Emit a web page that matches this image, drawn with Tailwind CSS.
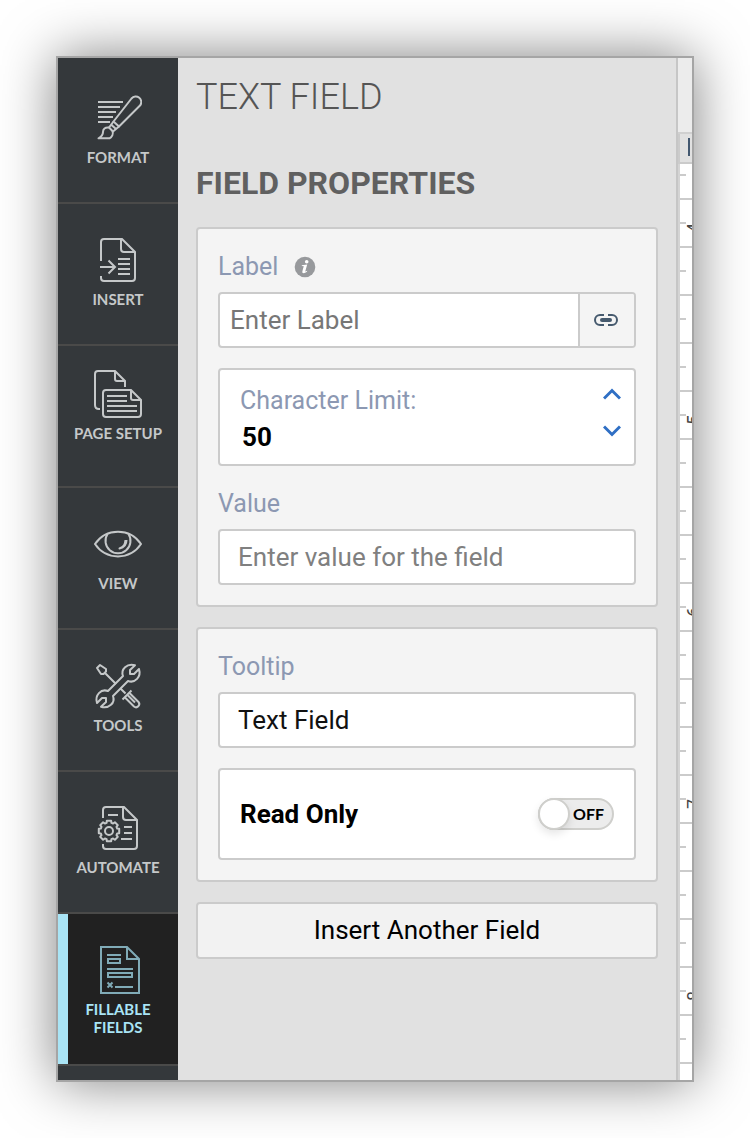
<!DOCTYPE html>
<html lang="en">
<head>
<meta charset="utf-8">
<meta name="viewport" content="width=device-width, initial-scale=1">
<title>Text Field</title>
<script src="https://cdn.jsdelivr.net/npm/@tailwindcss/browser@4"></script>
</head>
<body class="bg-white">
<div class="flex min-h-screen p-14">
  <div class="flex flex-1 overflow-hidden border-2 border-[#a5a5a5] bg-[#e1e1e1] shadow-[0_0_52px_rgba(0,0,0,0.5)]">

    <nav class="w-30 shrink-0 bg-[#34383b] font-['Lato',sans-serif] text-[15px] leading-[18px] font-bold text-[#c5c8c9]" aria-label="Editor sections">
      <button type="button" class="flex w-full flex-col items-center gap-[6px] border-b-2 border-[#4a4a49] pt-9 pb-9">
        <svg class="size-12" viewBox="0 0 48 48" fill="none" stroke="currentColor" stroke-width="2" stroke-linejoin="round" aria-hidden="true">
          <path d="M4 8H29M4 13H26M4 18H22M4 23H19M4 28H16"/>
          <path d="M37.500 4.500 19.500 27.500 25 32.500 46 11.500A5.300 5.300 0 0 0 37.500 4.500Z"/>
          <path d="M19.500 27.500 15 33.500 19 37.500 25 32.500M17 30.500 22 35"/>
          <path d="M15 33.500C11 33 9 35 9 38 9 41 8 42.500 4.500 44.300H15.500C18 43 19.500 40 18.500 37"/>
        </svg>
        <span>FORMAT</span>
      </button>
      <button type="button" class="flex w-full flex-col items-center gap-[6px] border-b-2 border-[#4a4a49] pt-8 pb-9">
        <svg class="size-12" viewBox="0 0 48 48" fill="none" stroke="currentColor" stroke-width="2" aria-hidden="true">
          <path d="M7 25V6Q7 3 10 3H28L41 16V42Q41 45 38 45H10Q7 45 7 42V40"/>
          <path d="M27 3V13Q27 16 30 16H41"/>
          <path d="M6 31H21M14.500 24.500 21 31 14.500 37.500M24 23H36M24 28H36M24 33H36M24 38H36"/>
        </svg>
        <span>INSERT</span>
      </button>
      <button type="button" class="flex w-full flex-col items-center gap-[6px] border-b-2 border-[#4a4a49] pt-6 pb-11">
        <svg class="size-12" viewBox="0 0 48 48" fill="none" stroke="currentColor" stroke-width="2" aria-hidden="true">
          <path d="M6 39H5Q1 39 1 35V4Q1 1 4 1H21L31 11V17"/>
          <path d="M21 1V9Q21 11 23 11H31"/>
          <path d="M12 20H37L47 30V44Q47 47 44 47H12Q9 47 9 44V23Q9 20 12 20Z"/>
          <path d="M37 20V28Q37 30 39 30H47M13 26H33M13 31H33M13 36H43M13 41H43"/>
        </svg>
        <span>PAGE SETUP</span>
      </button>
      <button type="button" class="flex w-full flex-col items-center gap-[6px] border-b-2 border-[#4a4a49] pt-8 pb-9">
        <svg class="size-12" viewBox="0 0 48 48" fill="none" stroke="currentColor" stroke-width="2" stroke-linejoin="round" aria-hidden="true">
          <path d="M1 24C12 7.500 36 7.500 47 24 36 40.500 12 40.500 1 24Z"/>
          <path d="M13.500 14A12.500 12.500 0 1 0 34.500 14"/>
          <path d="M32.500 20C32.500 24.500 30 27.500 25.500 28.500 30 26.500 31 24.500 31.500 20"/>
        </svg>
        <span>VIEW</span>
      </button>
      <button type="button" class="flex w-full flex-col items-center gap-[6px] border-b-2 border-[#4a4a49] pt-8 pb-9">
        <svg class="size-12" viewBox="0 0 48 48" fill="none" stroke="currentColor" stroke-width="2" stroke-linejoin="round" aria-hidden="true">
          <path d="M6 3 3 6 7 12 9.500 12 12 9.500V7ZM10.500 10.500 22 22M26.500 26.500 31.500 31.500"/>
          <path d="M29 14C26.500 7 33 1 41 3.200L36 8V12H40L45 7C47.500 15 41 21.500 34 19L19 34C21.500 41 15 47 7 44.800L12 40V36H8L3 41C.5 33 7 26.500 14 29Z"/>
          <path d="M28.500 37.500 37.500 28.500M35.500 31 44.500 40A3.200 3.200 0 0 1 40 44.500L31 35.500M34 33.500 41 40.500"/>
        </svg>
        <span>TOOLS</span>
      </button>
      <button type="button" class="flex w-full flex-col items-center gap-[6px] border-b-2 border-[#4a4a49] pt-8 pb-9">
        <svg class="size-12" viewBox="0 0 48 48" fill="none" stroke="currentColor" stroke-width="2" aria-hidden="true">
          <path d="M9 14V6Q9 3 12 3H30L43 16V42Q43 45 40 45H12Q9 45 9 42V40"/>
          <path d="M29 3V13Q29 16 32 16H43M14 11H24M30 23H38M30 29H38M27 35H38"/>
          <g transform="translate(15 27)" stroke-linejoin="round">
            <circle r="4"/>
            <path d="M10.200-2.200 10.200 2.200 8.200 2.400 7.500 4.100 8.800 5.900 5.900 8.800 4.100 7.500 2.400 8.200 2.200 10.200-2.200 10.200-2.400 8.200-4.100 7.500-5.900 8.800-8.800 5.900-7.500 4.100-8.200 2.400-10.200 2.200-10.200-2.200-8.200-2.400-7.500-4.100-8.800-5.900-5.900-8.800-4.100-7.500-2.400-8.200-2.200-10.200 2.200-10.200 2.400-8.200 4.100-7.500 5.900-8.800 8.800-5.900 7.500-4.100 8.200-2.400Z"/>
          </g>
        </svg>
        <span>AUTOMATE</span>
      </button>
      <button type="button" aria-current="page" class="flex w-full flex-col items-center gap-[6px] border-b-2 border-[#4a4a49] bg-[#212121] pt-8 pb-7 text-[#a9e4f5] shadow-[inset_10px_0_0_#a9e4f5]">
        <svg class="size-12 text-[#80abb7]" viewBox="0 0 48 48" fill="none" stroke="currentColor" stroke-width="2" aria-hidden="true">
          <path d="M7 1H33L45 13V47H7ZM33 1V13H45"/>
          <path d="M13 9H27M14 13H26V17H14ZM13 23H39M14 27H38V31H14ZM21 41H39M13.500 36.500 18.500 41.500M18.500 36.500 13.500 41.500"/>
        </svg>
        <span>FILLABLE<br>FIELDS</span>
      </button>
    </nav>

    <main class="min-w-0 flex-1 border-r-2 border-[#c6c6c6] px-[18px] pt-[21px] pb-10 font-['Roboto',sans-serif] text-[26px]">
      <h1 class="text-4xl leading-9 font-light text-[#555]">TEXT FIELD</h1>
      <h2 class="mt-[50px] mb-[26px] text-[32px] leading-9 font-bold text-[#606060]">FIELD PROPERTIES</h2>

      <section class="rounded-sm border-2 border-[#cbcbcb] bg-[#f4f4f4] px-5 pb-5">
        <div class="mt-5 mb-[7px] flex items-center gap-4">
          <label for="label" class="text-[25px] leading-9 text-[#8c98b2]">Label</label>
          <button type="button" aria-label="About the label">
            <svg class="size-[22px]" viewBox="0 0 22 22" aria-hidden="true">
              <circle cx="11" cy="11" r="10.300" fill="#97999c"/>
              <circle cx="12.700" cy="5.700" r="1.800" fill="#fff"/>
              <path d="M7.800 9.300 13.200 8.600 11.300 15.300Q11.300 16 13.200 14.800L13 15.800Q9.500 18.200 8.300 16.500 8 16 9.800 10.300L7.800 10Z" fill="#fff"/>
            </svg>
          </button>
        </div>
        <div class="flex h-14 overflow-hidden rounded-sm border-2 border-[#cbcbcb] bg-white">
          <input id="label" type="text" placeholder="Enter Label" class="min-w-0 flex-1 px-[10px] outline-none placeholder:text-[#777]">
          <button type="button" aria-label="Link label" class="flex w-14 items-center justify-center border-l-2 border-[#cbcbcb] bg-[#f4f4f4] pr-[2px]">
            <svg class="h-3 w-6" viewBox="0 0 24 12" fill="none" stroke="#465a6e" stroke-width="2" aria-hidden="true">
              <path d="M10 1H6A5 5 0 0 0 6 11H10M14 1H18A5 5 0 0 1 18 11H14"/>
              <path d="M8 6H16" stroke-width="4" stroke-linecap="round"/>
            </svg>
          </button>
        </div>
        <div class="mt-5 flex h-[98px] items-center rounded-sm border-2 border-[#cbcbcb] bg-white pr-1 pl-5">
          <div class="min-w-0 flex-1 pt-1">
            <label for="limit" class="block text-[25px] leading-9 text-[#8c98b2]">Character Limit:</label>
            <input id="limit" type="text" inputmode="numeric" value="50" class="block h-9 w-full px-[2px] leading-9 font-bold text-black outline-none">
          </div>
          <div class="flex flex-col gap-[9px] pb-[10px]">
            <button type="button" aria-label="Increase" class="px-[9px] py-2">
              <svg class="h-3 w-[18px]" viewBox="0 0 18 12" fill="none" stroke="#2f6fc4" stroke-width="3" aria-hidden="true"><path d="M1 10.500 9 2.500 17 10.500"/></svg>
            </button>
            <button type="button" aria-label="Decrease" class="px-[9px] py-2">
              <svg class="h-3 w-[18px]" viewBox="0 0 18 12" fill="none" stroke="#2f6fc4" stroke-width="3" aria-hidden="true"><path d="M1 1.500 9 9.500 17 1.500"/></svg>
            </button>
          </div>
        </div>
        <label for="value" class="mt-5 mb-[7px] block text-[25px] leading-9 text-[#8c98b2]">Value</label>
        <input id="value" type="text" placeholder="Enter value for the field" class="block h-14 w-full rounded-sm border-2 border-[#cbcbcb] bg-white px-[18px] outline-none placeholder:text-[#808080]">
      </section>

      <section class="mt-5 rounded-sm border-2 border-[#cbcbcb] bg-[#f4f4f4] px-5 pb-5">
        <label for="tooltip" class="mt-5 mb-[7px] block text-[25px] leading-9 text-[#8c98b2]">Tooltip</label>
        <input id="tooltip" type="text" value="Text Field" class="block h-14 w-full rounded-sm border-2 border-[#cbcbcb] bg-white px-[18px] text-[#111] outline-none">
        <label class="mt-5 flex h-[92px] items-center justify-between rounded-sm border-2 border-[#cbcbcb] bg-white px-5 font-bold text-black">
          <span>Read Only</span>
          <input type="checkbox" role="switch" class="sr-only">
          <span class="flex h-8 w-[76px] items-center justify-between rounded-full border-2 border-[#cfcfcc] bg-[#ececec] pr-2 text-base">
            <span class="-ml-[2px] size-8 rounded-full border-2 border-[#cfcfcc] bg-white shadow-[0_4px_8px_rgba(0,0,0,0.1)]"></span>
            <span class="font-['Lato',sans-serif] font-bold">OFF</span>
          </span>
        </label>
      </section>

      <button type="button" class="mt-5 block h-[57px] w-full rounded-sm border-2 border-[#cbcbcb] bg-[#f2f2f2] text-black">Insert Another Field</button>
    </main>

    <aside class="flex w-[14px] shrink-0 flex-col overflow-hidden bg-white" aria-label="Ruler">
      <div class="h-[76px] border-b-2 border-[#d0d0d0] bg-[#ececec]"></div>
      <div class="flex h-[30px] justify-end border-b-2 border-l-2 border-[#cbcbcb] bg-[#e1e1e1] px-[2px] pt-1">
        <div class="h-[18px] w-[2px] bg-[#435870]"></div>
      </div>
      <div class="relative min-h-0 flex-1 overflow-hidden border-l-2 border-[#d4d4d4]">
        <svg class="absolute inset-0 h-full w-full" aria-hidden="true">
          <defs>
            <pattern id="ticks" width="12" height="48" patternUnits="userSpaceOnUse">
              <path d="M0 11H6M0 35H12" stroke="#cbcbcb" stroke-width="2"/>
            </pattern>
          </defs>
          <rect width="100%" height="100%" fill="url(#ticks)"/>
        </svg>
        <ol class="absolute top-[54px] left-1 flex w-5 flex-col gap-[172px] font-['Roboto',sans-serif] text-lg leading-5 text-[#444]">
          <li class="flex h-5 w-5 rotate-180 justify-center [writing-mode:vertical-rl]"><span>4</span></li>
          <li class="flex h-5 w-5 rotate-180 justify-center [writing-mode:vertical-rl]"><span>5</span></li>
          <li class="flex h-5 w-5 rotate-180 justify-center [writing-mode:vertical-rl]"><span>6</span></li>
          <li class="flex h-5 w-5 rotate-180 justify-center [writing-mode:vertical-rl]"><span>7</span></li>
          <li class="flex h-5 w-5 rotate-180 justify-center [writing-mode:vertical-rl]"><span>8</span></li>
        </ol>
      </div>
    </aside>
  </div>
</div>
</body>
</html>
